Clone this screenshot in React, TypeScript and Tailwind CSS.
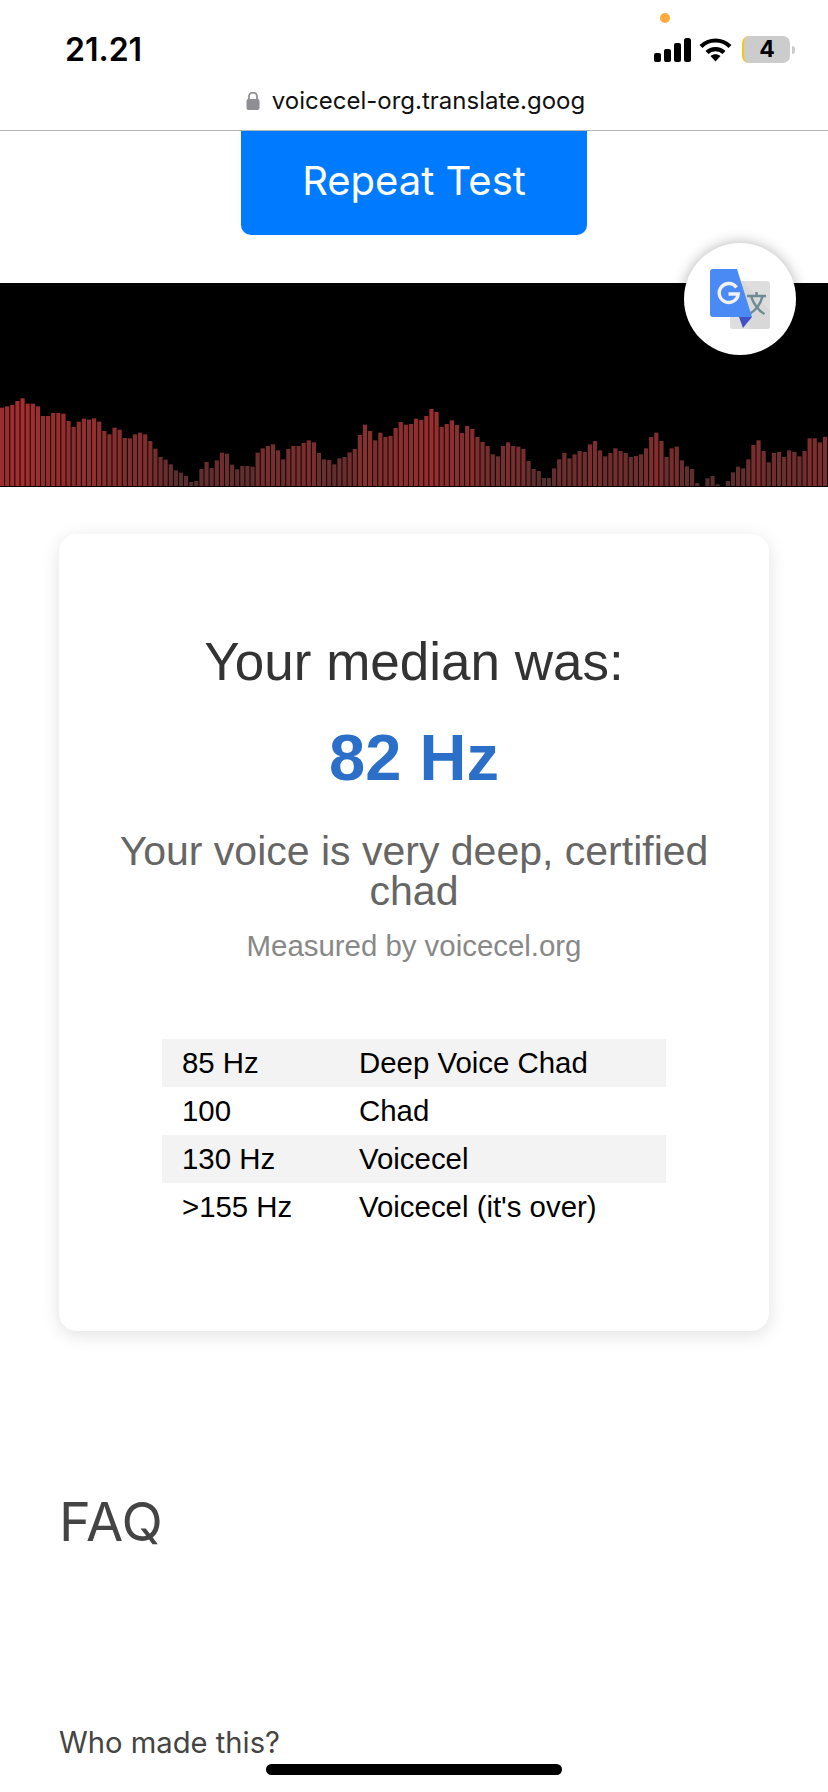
const tops = [
  80, 76, 72, 60, 52, 68, 68, 76, 105, 105, 96, 96, 98, 120, 138, 122, 113, 116, 112, 122, 150, 160, 140, 146, 171, 172, 160, 155, 160, 180, 203, 228, 236, 250, 268, 275, 285, 303, 300, 264, 243, 261, 238, 215, 218, 251, 265, 255, 255, 257, 215, 202, 195, 190,
  208, 235, 204, 195, 195, 186, 178, 184, 216, 235, 237, 250, 232, 228, 214, 204, 162, 131, 150, 178, 155, 168, 165, 141, 123, 131, 129, 113, 117, 105, 84, 93, 138, 129, 118, 132, 156, 135, 144, 168, 183, 195, 220, 226, 195, 184, 195, 197, 204, 240, 264, 270, 291, 291,
  262, 235, 216, 232, 220, 210, 213, 190, 180, 208, 226, 216, 202, 210, 216, 228, 225, 220, 202, 168, 155, 180, 228, 202, 197, 238, 256, 264, 306, 315, 292, 285, 310, 315, 300, 274, 257, 262, 235, 192, 178, 210, 244, 216, 213, 228, 208, 213, 226, 210, 172, 172, 184, 168,
];

const rows = [
  ['85 Hz', 'Deep Voice Chad'],
  ['100', 'Chad'],
  ['130 Hz', 'Voicecel'],
  ['>155 Hz', "Voicecel (it's over)"],
];

function StatusIcons() {
  return (
    <div className="flex items-center gap-[8px]">
      <svg width="37" height="24" viewBox="0 0 37 24" fill="#000">
        <rect x="0" y="15" width="7" height="9" rx="2" />
        <rect x="10" y="11" width="7" height="13" rx="2" />
        <rect x="20" y="5" width="7" height="19" rx="2" />
        <rect x="30" y="0" width="7" height="24" rx="2.5" />
      </svg>
      <svg width="33" height="25" viewBox="0 0 33 25" className="mr-[2px]">
        <path d="M2 9.5C10 1.5 23 1.5 31 9.5" fill="none" stroke="#000" strokeWidth="4.2" />
        <path d="M8 15.5C12.5 11 20.5 11 25 15.5" fill="none" stroke="#000" strokeWidth="4.2" />
        <path d="M11.5 19 16.5 24.5 21.5 19C18.5 16.5 14.5 16.5 11.5 19Z" fill="#000" />
      </svg>
      <div className="flex items-center gap-[2px]">
        <div className="flex h-[27px] w-[48px] items-center justify-center overflow-hidden rounded-[7px] border-l-2 border-[#fcc419] bg-[#cccccc] text-[23px] leading-none font-bold text-black">
          4
        </div>
        <div className="h-[8px] w-[3px] rounded-r-full bg-[#cccccc]" />
      </div>
    </div>
  );
}

function TranslateBubble() {
  return (
    <div className="absolute top-[243px] left-[684px] flex h-[112px] w-[112px] items-center justify-center rounded-full bg-white shadow-[0_0_14px_rgba(0,0,0,0.3)]">
      <svg width="60" height="60" viewBox="0 0 60 60">
        <rect x="20" y="12" width="40" height="48" rx="3" fill="#dedede" />
        <path d="M32 12 L60 42 L60 57 Q60 60 57 60 L40 60 Z" fill="#d4d4d4" opacity="0.6" />
        <path d="M37 27H56M46.5 23V27M39.5 45C46 41 51 34 52.5 27M41 27C43 34 48.5 42 54.5 45" fill="none" stroke="#6f8a94" strokeWidth="2.4" />
        <path d="M3 0H27L42 48H3Q0 48 0 45V3Q0 0 3 0Z" fill="#4a8af4" />
        <path d="M29 48H42L33 59Z" fill="#3f51c4" />
        <path d="M26.5 18.5A9.5 9.5 0 1 0 28.2 25H18.5" fill="none" stroke="#f1f1f1" strokeWidth="3.4" />
      </svg>
    </div>
  );
}

export default function App() {
  return (
    <div className="relative h-[1792px] w-[828px] overflow-hidden bg-white font-['Inter',sans-serif]">
      {/* ステータスバー */}
      <header className="h-[131px] border-b border-[#b3b3b3]">
        <div className="flex h-[87px] items-start justify-between pt-[37px] pr-[33px] pl-[65px]">
          <span className="text-[32px] leading-[26px] font-semibold text-black">21.21</span>
          <div className="-mt-px">
            <StatusIcons />
          </div>
        </div>
        <div className="ml-[3px] flex items-center justify-center gap-[12px]">
          <svg width="14" height="18" viewBox="0 0 14 18" fill="#8e8e93">
            <rect x="0.5" y="7" width="13" height="11" rx="2" />
            <path d="M3 8V4.5a4 4 0 0 1 8 0V8" fill="none" stroke="#8e8e93" strokeWidth="1.8" />
          </svg>
          <span className="text-[24px] leading-[28px] text-[#111]">voicecel-org.translate.goog</span>
        </div>
      </header>
      <div className="absolute top-[13px] left-[660px] h-[10px] w-[10px] rounded-full bg-[#ffab40]" />

      <div className="flex justify-center">
        <button className="flex h-[104px] w-[346px] items-center justify-center rounded-b-[10px] bg-[#007bff] pb-[4px] text-[40px] font-normal text-white">
          Repeat Test
        </button>
      </div>

      {/* 波形 */}
      <div className="mt-[48px] border-b border-black bg-black">
        <svg width="828" height="203" viewBox="0 0 828 203" className="block">
          <g className="blur-[0.7px]">
            {tops.map((top, i) => {
              const h = (315 - top) / 3;
              return (
                <rect
                  key={i}
                  x={i * (828 / tops.length)}
                  y={203 - h}
                  width={4.2}
                  height={h + 4}
                  fill={`rgb(${Math.round(h + 78)},46,46)`}
                />
              );
            })}
          </g>
        </svg>
      </div>

      {/* 結果カード */}
      <main className="mx-[59px] mt-[47px] flex h-[797px] w-[710px] flex-col items-center rounded-[18px] bg-white pt-[98px] font-['Liberation_Sans',sans-serif] shadow-[0_4px_18px_rgba(0,0,0,0.12)]">
        <h1 className="text-[53px] leading-[60px] font-normal text-[#333]">Your median was:</h1>
        <p className="mt-[30px] text-[65px] leading-[72px] font-bold text-[#2b6fc8]">82 Hz</p>
        <p className="mt-[37px] w-[620px] text-center text-[41px] leading-[40px] text-[#666]">
          Your voice is very deep, certified chad
        </p>
        <p className="mt-[18px] text-[29.4px] leading-[34px] text-[#888]">Measured by voicecel.org</p>
        <table className="mt-[76px] w-[504px] border-collapse text-[29.4px] text-black">
          <tbody>
            {rows.map((row, i) => (
              <tr key={row[0]} className={i % 2 === 0 ? 'h-[48px] bg-[#f3f3f3]' : 'h-[48px]'}>
                <td className="w-[197px] pl-[20px]">{row[0]}</td>
                <td>{row[1]}</td>
              </tr>
            ))}
          </tbody>
        </table>
      </main>

      <section className="mx-[59px] mt-[157px] text-[#444]">
        <h2 className="text-[54px] leading-[68px] font-normal">FAQ</h2>
        <p className="mt-[170px] text-[29.2px] leading-[34px]">Who made this?</p>
      </section>

      <TranslateBubble />
      <div className="absolute top-[1764px] left-[266px] h-[11px] w-[296px] rounded-full bg-black" />
    </div>
  );
}
